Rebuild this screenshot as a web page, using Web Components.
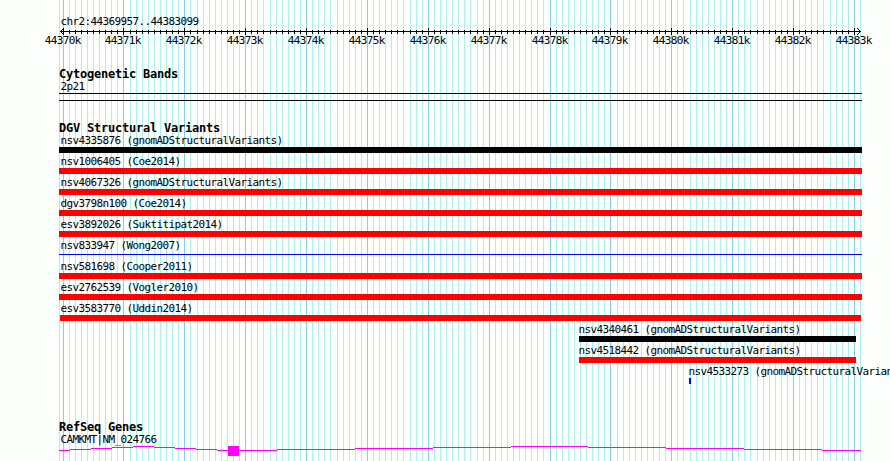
<!DOCTYPE html>
<html lang="en">
<head>
<meta charset="utf-8">
<title>chr2:44369957..44383099</title>
<style>
    body {
        margin: 0;
        background: #fdfffd;
        color: #000;
        font: 11px/13px "DejaVu Sans Mono", monospace;
        letter-spacing: -0.62px;
        overflow: hidden;
    }
</style>
</head>
<body>
<genome-panel>
    <genome-ruler region="chr2:44369957..44383099"></genome-ruler>
    <genome-track name="Cytogenetic Bands" style="margin-top: 20px">
        <cyto-band>2p21</cyto-band>
    </genome-track>
    <genome-track name="DGV Structural Variants" style="margin-top: 20px">
        <variant-row color="#000">nsv4335876 (gnomADStructuralVariants)</variant-row>
        <variant-row>nsv1006405 (Coe2014)</variant-row>
        <variant-row>nsv4067326 (gnomADStructuralVariants)</variant-row>
        <variant-row>dgv3798n100 (Coe2014)</variant-row>
        <variant-row>esv3892026 (Suktitipat2014)</variant-row>
        <variant-row color="#00f" thin>nsv833947 (Wong2007)</variant-row>
        <variant-row>nsv581698 (Cooper2011)</variant-row>
        <variant-row>esv2762539 (Vogler2010)</variant-row>
        <variant-row start="60" end="861">esv3583770 (Uddin2014)</variant-row>
        <variant-row start="579" end="856" label="578.4" color="#000">nsv4340461 (gnomADStructuralVariants)</variant-row>
        <variant-row start="579" end="856" label="578.4">nsv4518442 (gnomADStructuralVariants)</variant-row>
        <variant-row start="689" end="691" label="688.4" color="#00f">nsv4533273 (gnomADStructuralVariants)</variant-row>
    </genome-track>
    <genome-track name="RefSeq Genes" style="margin-top: 34px">
        <gene-model>CAMKMT|NM_024766</gene-model>
    </genome-track>
</genome-panel>

<script>
const LEFT = 59;
const RIGHT = 862;
const LABEL = 60.4;
const ORIGIN = 62.6;      // x of 44370k
const PER_KB = 60.87;     // pixels per 1000 bp

// every 100 bp line, each tenth one is major
const ticks = [];
for (let i = 0; i <= 131; i++) {
    ticks.push({ x: Math.round(ORIGIN + i * PER_KB / 10), major: i % 10 === 0, kb: 44370 + i / 10 });
}

class GenomePanel extends HTMLElement {
    constructor() {
        super();
        this.attachShadow({ mode: 'open' });

        const lines = ticks.map(t =>
            `<rect x="${t.x}" y="0" width="1" height="461" fill="${t.major ? '#87ceeb' : '#afeeee'}"/>`
        ).join('');

        this.shadowRoot.innerHTML = `
        <style>
        :host {
            display: grid;
            width: 890px;
            height: 461px;
            overflow: hidden;
        }

        svg, .tracks {
            grid-area: 1 / 1;
        }

        .tracks {
            min-width: 0;
            padding-top: 15px;
            z-index: 1;
        }
        </style>
        <svg width="890" height="461" shape-rendering="crispEdges">
            <rect x="${LEFT}" y="0" width="1" height="461" fill="#afeeee"/>
            ${lines}
        </svg>
        <div class="tracks"><slot></slot></div>
        `;
    }
}

class GenomeRuler extends HTMLElement {
    constructor() {
        super();
        this.attachShadow({ mode: 'open' });
    }

    connectedCallback() {
        const majors = ticks.filter(t => t.major);
        const marks = ticks.slice(0, -1).map(t => t.major
            ? `M${t.x + 0.5} 0v7`
            : `M${t.x + 0.5} 2v4`
        ).join('');
        const labels = majors.map((t, i) => {
            const next = majors[i + 1];
            return `<span style="width: ${next ? next.x - t.x : 37}px">${t.kb}k</span>`;
        }).join('');

        this.shadowRoot.innerHTML = `
        <style>
        :host {
            display: block;
        }

        .region {
            padding-left: ${LABEL}px;
        }

        svg {
            display: block;
        }

        .labels {
            display: flex;
            margin-top: -1px;
            padding-left: ${majors[0].x - 18.3}px;
        }

        .labels span {
            flex: none;
        }
        </style>
        <div class="region">${this.getAttribute('region')}</div>
        <svg width="890" height="7" fill="none" stroke="#000" shape-rendering="crispEdges">
            <path d="M60 3.5H861"/>
            <path d="${marks}"/>
            <path d="M63.5 0v1M62.5 1v1M61.5 2v1M60.5 3v1M61.5 4v1M62.5 5v1M63.5 6v1"/>
            <path d="M857.5 0v1M858.5 1v1M859.5 2v1M860.5 3v1M859.5 4v1M858.5 5v1M857.5 6v1"/>
        </svg>
        <div class="labels">${labels}</div>
        `;
    }
}

class GenomeTrack extends HTMLElement {
    constructor() {
        super();
        this.attachShadow({ mode: 'open' });
    }

    connectedCallback() {
        this.shadowRoot.innerHTML = `
        <style>
        :host {
            display: block;
        }

        .name {
            margin-bottom: -1px;
            padding-left: ${LEFT}px;
            font-size: 12px;
            font-weight: bold;
            line-height: 14px;
            letter-spacing: -0.224px;
        }
        </style>
        <div class="name">${this.getAttribute('name')}</div>
        <slot></slot>
        `;
    }
}

class CytoBand extends HTMLElement {
    constructor() {
        super();
        this.attachShadow({ mode: 'open' });
        this.shadowRoot.innerHTML = `
        <style>
        :host {
            display: block;
        }

        .label {
            padding-left: ${LABEL}px;
        }

        .band {
            box-sizing: border-box;
            width: ${RIGHT - LEFT}px;
            height: 8px;
            margin-left: ${LEFT}px;
            border: solid #000;
            border-width: 1px 0;
        }
        </style>
        <div class="label"><slot></slot></div>
        <div class="band"></div>
        `;
    }
}

class VariantRow extends HTMLElement {
    constructor() {
        super();
        this.attachShadow({ mode: 'open' });
    }

    connectedCallback() {
        const start = Number(this.getAttribute('start') || LEFT);
        const end = Number(this.getAttribute('end') || RIGHT);
        const label = this.getAttribute('label') || LABEL;
        const thin = this.hasAttribute('thin');

        this.shadowRoot.innerHTML = `
        <style>
        :host {
            display: block;
            height: 21px;
            white-space: nowrap;
        }

        .label {
            padding-left: ${label}px;
        }

        .bar {
            width: ${end - start}px;
            height: ${thin ? 1 : 6}px;
            margin: ${thin ? 2 : 0}px 0 0 ${start}px;
            background: ${this.getAttribute('color') || '#f00'};
        }
        </style>
        <div class="label"><slot></slot></div>
        <div class="bar"></div>
        `;
    }
}

class GeneModel extends HTMLElement {
    constructor() {
        super();
        this.attachShadow({ mode: 'open' });
        // introns as stepped hats on both sides of the exon
        this.shadowRoot.innerHTML = `
        <style>
        :host {
            display: block;
        }

        .label {
            padding-left: ${LABEL}px;
        }

        svg {
            display: block;
        }
        </style>
        <div class="label"><slot></slot></div>
        <svg width="890" height="10" shape-rendering="crispEdges">
            <path fill="none" stroke="#f0f" d="M59 4.5H70M70 3.5H91M91 2.5H112M112 1.5H133M133 .5H154M154 1.5H175M175 2.5H196M196 3.5H217M217 4.5H228
                M239 4.5H277M277 3.5H355M355 2.5H433M433 1.5H511M511 .5H588M588 1.5H666M666 2.5H744M744 3.5H822M822 4.5H861"/>
            <rect x="228" y="0" width="11" height="10" fill="#f0f"/>
        </svg>
        `;
    }
}

customElements.define('genome-panel', GenomePanel);
customElements.define('genome-ruler', GenomeRuler);
customElements.define('genome-track', GenomeTrack);
customElements.define('cyto-band', CytoBand);
customElements.define('variant-row', VariantRow);
customElements.define('gene-model', GeneModel);
</script>
</body>
</html>
